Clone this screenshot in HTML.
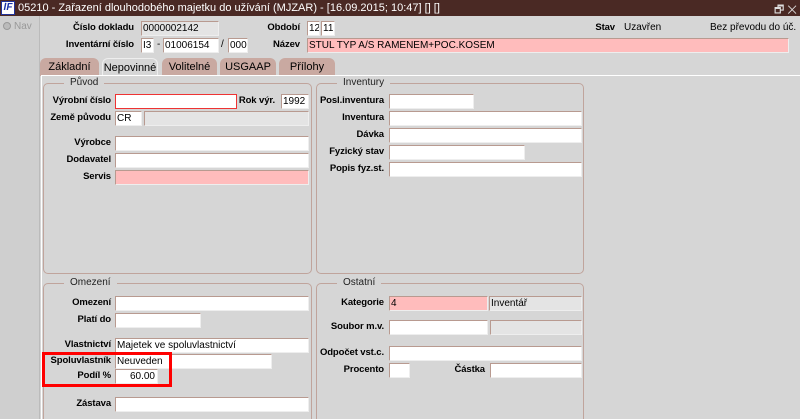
<!DOCTYPE html>
<html><head><meta charset="utf-8"><style>
*{margin:0;padding:0;box-sizing:border-box}
html,body{width:800px;height:419px;overflow:hidden}
body{background:#d6d6d6;font-family:"Liberation Sans",sans-serif;font-size:10px;color:#000;position:relative}
.a{position:absolute;white-space:nowrap}
.l{position:absolute;font-weight:bold;text-align:right;white-space:nowrap;line-height:14px;font-size:9.5px;letter-spacing:-0.1px}
.i{position:absolute;height:15px;background:#fff;border:1px solid #b89a90;border-right-color:#eee;border-bottom-color:#eee;line-height:13px;padding-left:1px;font-size:10px;white-space:nowrap;overflow:hidden}
.g{background:#e4e4e4}
.p{background:#ffbcbc}
.grp{position:absolute;border:1px solid #c0a49c;border-radius:5px}
.gt{position:absolute;background:#d6d6d6;padding:0 6px;font-size:10px;color:#222;top:-7px}
.tab{position:absolute;top:58px;height:18px;background:#c9a9a1;border-radius:6px 6px 0 0;text-align:center;line-height:18px;font-size:11px}
</style></head><body>
<div class="a" style="left:0;top:0;width:800px;height:16px;background:#4a2924;color:#fff;font-size:11px;line-height:16px;padding-left:18px">05210 - Zařazení dlouhodobého majetku do užívání (MJZAR) - [16.09.2015; 10:47] [] []</div>
<div class="a" style="left:1px;top:1px;width:14px;height:14px;background:#fff;border:1px solid #223399;color:#1a33aa;font-weight:bold;font-style:italic;font-size:10px;line-height:12px;text-align:center">ÍF</div>
<div class="a" style="left:774px;top:1px;color:#ddd;font-size:11px">🗗 ✕</div>
<div class="a" style="left:0;top:16px;width:40px;height:403px;background:#cfcfcf;border-right:1px solid #bbb"></div>
<div class="a" style="left:3px;top:22px;width:8px;height:8px;border-radius:50%;background:#bbb;border:1px solid #999"></div>
<div class="a" style="left:14px;top:21px;color:#999;font-size:10px">Nav</div>

<div class="l" style="right:666px;top:21px">Číslo dokladu</div>
<div class="i g" style="left:141px;top:21px;width:78px">0000002142</div>
<div class="l" style="right:500px;top:21px">Období</div>
<div class="i" style="left:307px;top:21px;width:13px">12</div>
<div class="i" style="left:321px;top:21px;width:14px">11</div>
<div class="l" style="right:185px;top:21px">Stav</div>
<div class="a" style="left:624px;top:21px;line-height:14px">Uzavřen</div>
<div class="a" style="left:710px;top:21px;line-height:14px">Bez převodu do úč.</div>

<div class="l" style="right:666px;top:38px">Inventární číslo</div>
<div class="i" style="left:141px;top:38px;width:13px">I3</div>
<div class="a" style="left:157px;top:38px;line-height:14px">-</div>
<div class="i" style="left:163px;top:38px;width:56px">01006154</div>
<div class="a" style="left:221px;top:38px;line-height:14px">/</div>
<div class="i" style="left:228px;top:38px;width:20px">000</div>
<div class="l" style="right:500px;top:38px">Název</div>
<div class="i p" style="left:307px;top:38px;width:482px">STUL TYP A/S RAMENEM+POC.KOSEM</div>

<div class="tab" style="left:40px;width:59px">Základní</div>
<div class="tab" style="left:102px;width:56px;background:#d6d6d6;border:1px solid #eee;border-bottom:none">Nepovinné</div>
<div class="tab" style="left:162px;width:55px">Volitelné</div>
<div class="tab" style="left:220px;width:56px">USGAAP</div>
<div class="tab" style="left:279px;width:56px">Přílohy</div>
<div class="a" style="left:41px;top:75px;width:759px;height:1px;background:#fff"></div>
<div class="a" style="left:41px;top:75px;width:1px;height:344px;background:#fff"></div>

<div class="grp" style="left:43px;top:83px;width:269px;height:191px"><span class="gt" style="left:20px">Původ</span></div>
<div class="grp" style="left:316px;top:83px;width:268px;height:191px"><span class="gt" style="left:20px">Inventury</span></div>
<div class="grp" style="left:43px;top:283px;width:269px;height:145px"><span class="gt" style="left:20px">Omezení</span></div>
<div class="grp" style="left:316px;top:283px;width:268px;height:145px"><span class="gt" style="left:20px">Ostatní</span></div>

<div class="l" style="right:689px;top:94px">Výrobní číslo</div>
<div class="i" style="left:115px;top:94px;width:122px;border:1px solid #e33">&nbsp;</div>
<div class="l" style="right:525px;top:94px">Rok výr.</div>
<div class="i" style="left:281px;top:94px;width:28px">1992</div>
<div class="l" style="right:689px;top:111px">Země původu</div>
<div class="i" style="left:115px;top:111px;width:27px">CR</div>
<div class="i g" style="left:144px;top:111px;width:165px"></div>
<div class="l" style="right:689px;top:136px">Výrobce</div>
<div class="i" style="left:115px;top:136px;width:194px"></div>
<div class="l" style="right:689px;top:153px">Dodavatel</div>
<div class="i" style="left:115px;top:153px;width:194px"></div>
<div class="l" style="right:689px;top:170px">Servis</div>
<div class="i p" style="left:115px;top:170px;width:194px"></div>

<div class="l" style="right:416px;top:94px">Posl.inventura</div>
<div class="i" style="left:389px;top:94px;width:85px"></div>
<div class="l" style="right:416px;top:111px">Inventura</div>
<div class="i" style="left:389px;top:111px;width:193px"></div>
<div class="l" style="right:416px;top:128px">Dávka</div>
<div class="i" style="left:389px;top:128px;width:193px"></div>
<div class="l" style="right:416px;top:145px">Fyzický stav</div>
<div class="i" style="left:389px;top:145px;width:136px"></div>
<div class="l" style="right:416px;top:162px">Popis fyz.st.</div>
<div class="i" style="left:389px;top:162px;width:193px"></div>

<div class="l" style="right:689px;top:296px">Omezení</div>
<div class="i" style="left:115px;top:296px;width:194px"></div>
<div class="l" style="right:689px;top:313px">Platí do</div>
<div class="i" style="left:115px;top:313px;width:86px"></div>
<div class="l" style="right:689px;top:338px">Vlastnictví</div>
<div class="i" style="left:115px;top:338px;width:194px">Majetek ve spoluvlastnictví</div>
<div class="l" style="right:689px;top:354px">Spoluvlastník</div>
<div class="i" style="left:115px;top:354px;width:157px">Neuveden</div>
<div class="l" style="right:689px;top:369px">Podíl %</div>
<div class="i" style="left:115px;top:369px;width:43px;text-align:right;padding-right:2px">60.00</div>
<div class="a" style="left:42px;top:352px;width:130px;height:35px;border:3px solid #f00"></div>
<div class="l" style="right:689px;top:397px">Zástava</div>
<div class="i" style="left:115px;top:397px;width:194px"></div>

<div class="l" style="right:416px;top:296px">Kategorie</div>
<div class="i p" style="left:389px;top:296px;width:99px">4</div>
<div class="i g" style="left:489px;top:296px;width:93px">Inventář</div>
<div class="l" style="right:416px;top:320px">Soubor m.v.</div>
<div class="i" style="left:389px;top:320px;width:99px"></div>
<div class="i g" style="left:490px;top:320px;width:92px"></div>
<div class="l" style="right:416px;top:346px">Odpočet vst.c.</div>
<div class="i" style="left:389px;top:346px;width:193px"></div>
<div class="l" style="right:416px;top:363px">Procento</div>
<div class="i" style="left:389px;top:363px;width:21px"></div>
<div class="l" style="right:315px;top:363px">Částka</div>
<div class="i" style="left:490px;top:363px;width:92px"></div>
</body></html>
